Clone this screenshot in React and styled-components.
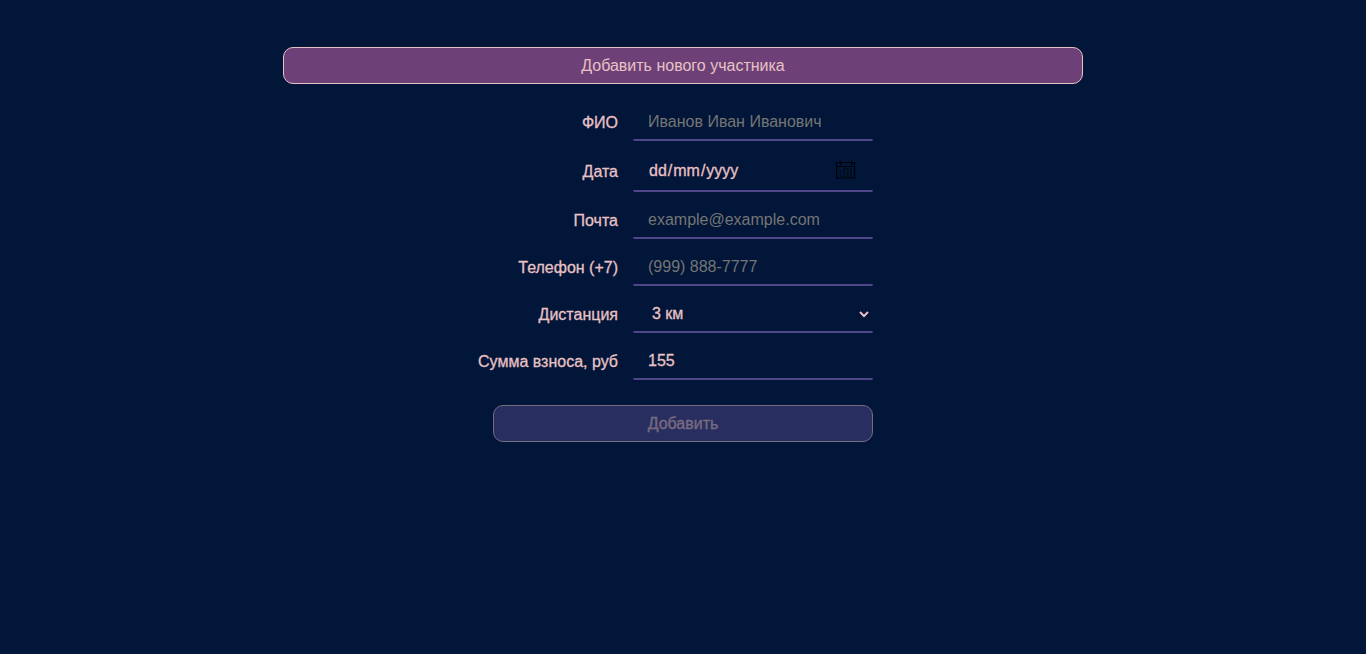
import React from "react";
import styled, { createGlobalStyle, css } from "styled-components";

const GlobalStyle = createGlobalStyle`
  * { box-sizing: border-box; }
  body {
    margin: 0;
    background: #011638;
    color: #e8c1c5;
    font: 16px/18px "Liberation Sans", Arial, sans-serif;
  }
`;

const Page = styled.main`
  display: flex;
  flex-direction: column;
  align-items: center;
  width: 800px;
  min-height: 654px;
  margin: 0 auto;
  padding-top: 47px;
`;

const buttonBase = css`
  height: 37px;
  padding: 0;
  border: 1px solid #e8c1c5;
  border-radius: 10px;
  color: #e8c1c5;
  font: inherit;
`;

const ToggleButton = styled.button`
  ${buttonBase}
  width: 800px;
  background: #6d4177;
`;

const SubmitButton = styled.button`
  ${buttonBase}
  width: 380px;
  margin-top: 15px;
  background: #4f4789;
  opacity: 0.5;
  -webkit-text-stroke: 0.3px;
`;

const Form = styled.form`
  display: flex;
  flex-direction: column;
  align-items: center;
  margin-top: 20px;
`;

const Row = styled.div`
  display: grid;
  grid-template-columns: 240px 240px;
  column-gap: 15px;
  align-items: center;
  width: 495px;
  margin: 0 115px 10px 0;
`;

const Label = styled.label`
  padding-top: 1px;
  text-align: right;
  -webkit-text-stroke: 0.3px;
`;

const control = css`
  width: 240px;
  height: 37px;
  margin: 0;
  padding: 1px 15px 0;
  border: 0 solid #4f4789;
  border-bottom-width: 2px;
  border-radius: 2px;
  outline: none;
  background: transparent;
  color: #e8c1c5;
  font: inherit;
  -webkit-text-stroke: 0.3px;
`;

const Input = styled.input`
  ${control}
  &::placeholder {
    color: #757575;
    opacity: 1;
    -webkit-text-stroke: 0;
  }
`;

const SelectField = styled.div`
  ${control}
  padding: 0;
`;

const Select = styled.select`
  display: block;
  width: 239px;
  height: 37px;
  padding: 0 0 2px 15px;
  border: 0;
  outline: none;
  background: transparent;
  color: inherit;
  font: inherit;
  -webkit-text-stroke: inherit;
`;

const DateField = styled.div`
  ${control}
  display: flex;
  align-items: center;
  justify-content: space-between;
  height: 41px;
  padding: 0 17px 0 15px;
`;

const DatePart = styled.span`
  padding: 0 1px;
`;

const Calendar = styled.svg`
  display: block;
  margin-bottom: 1px;
`;

const CalendarIcon = () => (
  <Calendar width="20" height="20" viewBox="0 0 20 20" fill="none" stroke="#000" aria-hidden="true">
    <path d="M.5 2.500h18v15.500H.5z" strokeWidth="1.2" />
    <path d="M.5 6.500h18M4.500 1v4M15.500 1v4" strokeWidth="1.2" />
    <path d="M8 8v9M11.500 8v9M15 8v9M4.500 10.500v6.500" strokeWidth="2" strokeDasharray="3 .8" opacity="0.5" />
  </Calendar>
);

export default function App() {
  return (
    <>
      <GlobalStyle />
      <Page>
        <ToggleButton type="button">Добавить нового участника</ToggleButton>
        <Form>
          <Row>
            <Label htmlFor="name">ФИО</Label>
            <Input id="name" placeholder="Иванов Иван Иванович" />
          </Row>
          <Row>
            <Label>Дата</Label>
            <DateField>
              <span>
                <DatePart>dd</DatePart>/<DatePart>mm</DatePart>/<DatePart>yyyy</DatePart>
              </span>
              <CalendarIcon />
            </DateField>
          </Row>
          <Row>
            <Label htmlFor="email">Почта</Label>
            <Input id="email" type="email" placeholder="example@example.com" />
          </Row>
          <Row>
            <Label htmlFor="phone">Телефон (+7)</Label>
            <Input id="phone" type="tel" placeholder="(999) 888-7777" />
          </Row>
          <Row>
            <Label htmlFor="distance">Дистанция</Label>
            <SelectField>
              <Select id="distance" defaultValue="3">
                <option value="3">3 км</option>
              </Select>
            </SelectField>
          </Row>
          <Row>
            <Label htmlFor="fee">Сумма взноса, руб</Label>
            <Input id="fee" defaultValue="155" />
          </Row>
          <SubmitButton type="submit" disabled>Добавить</SubmitButton>
        </Form>
      </Page>
    </>
  );
}
